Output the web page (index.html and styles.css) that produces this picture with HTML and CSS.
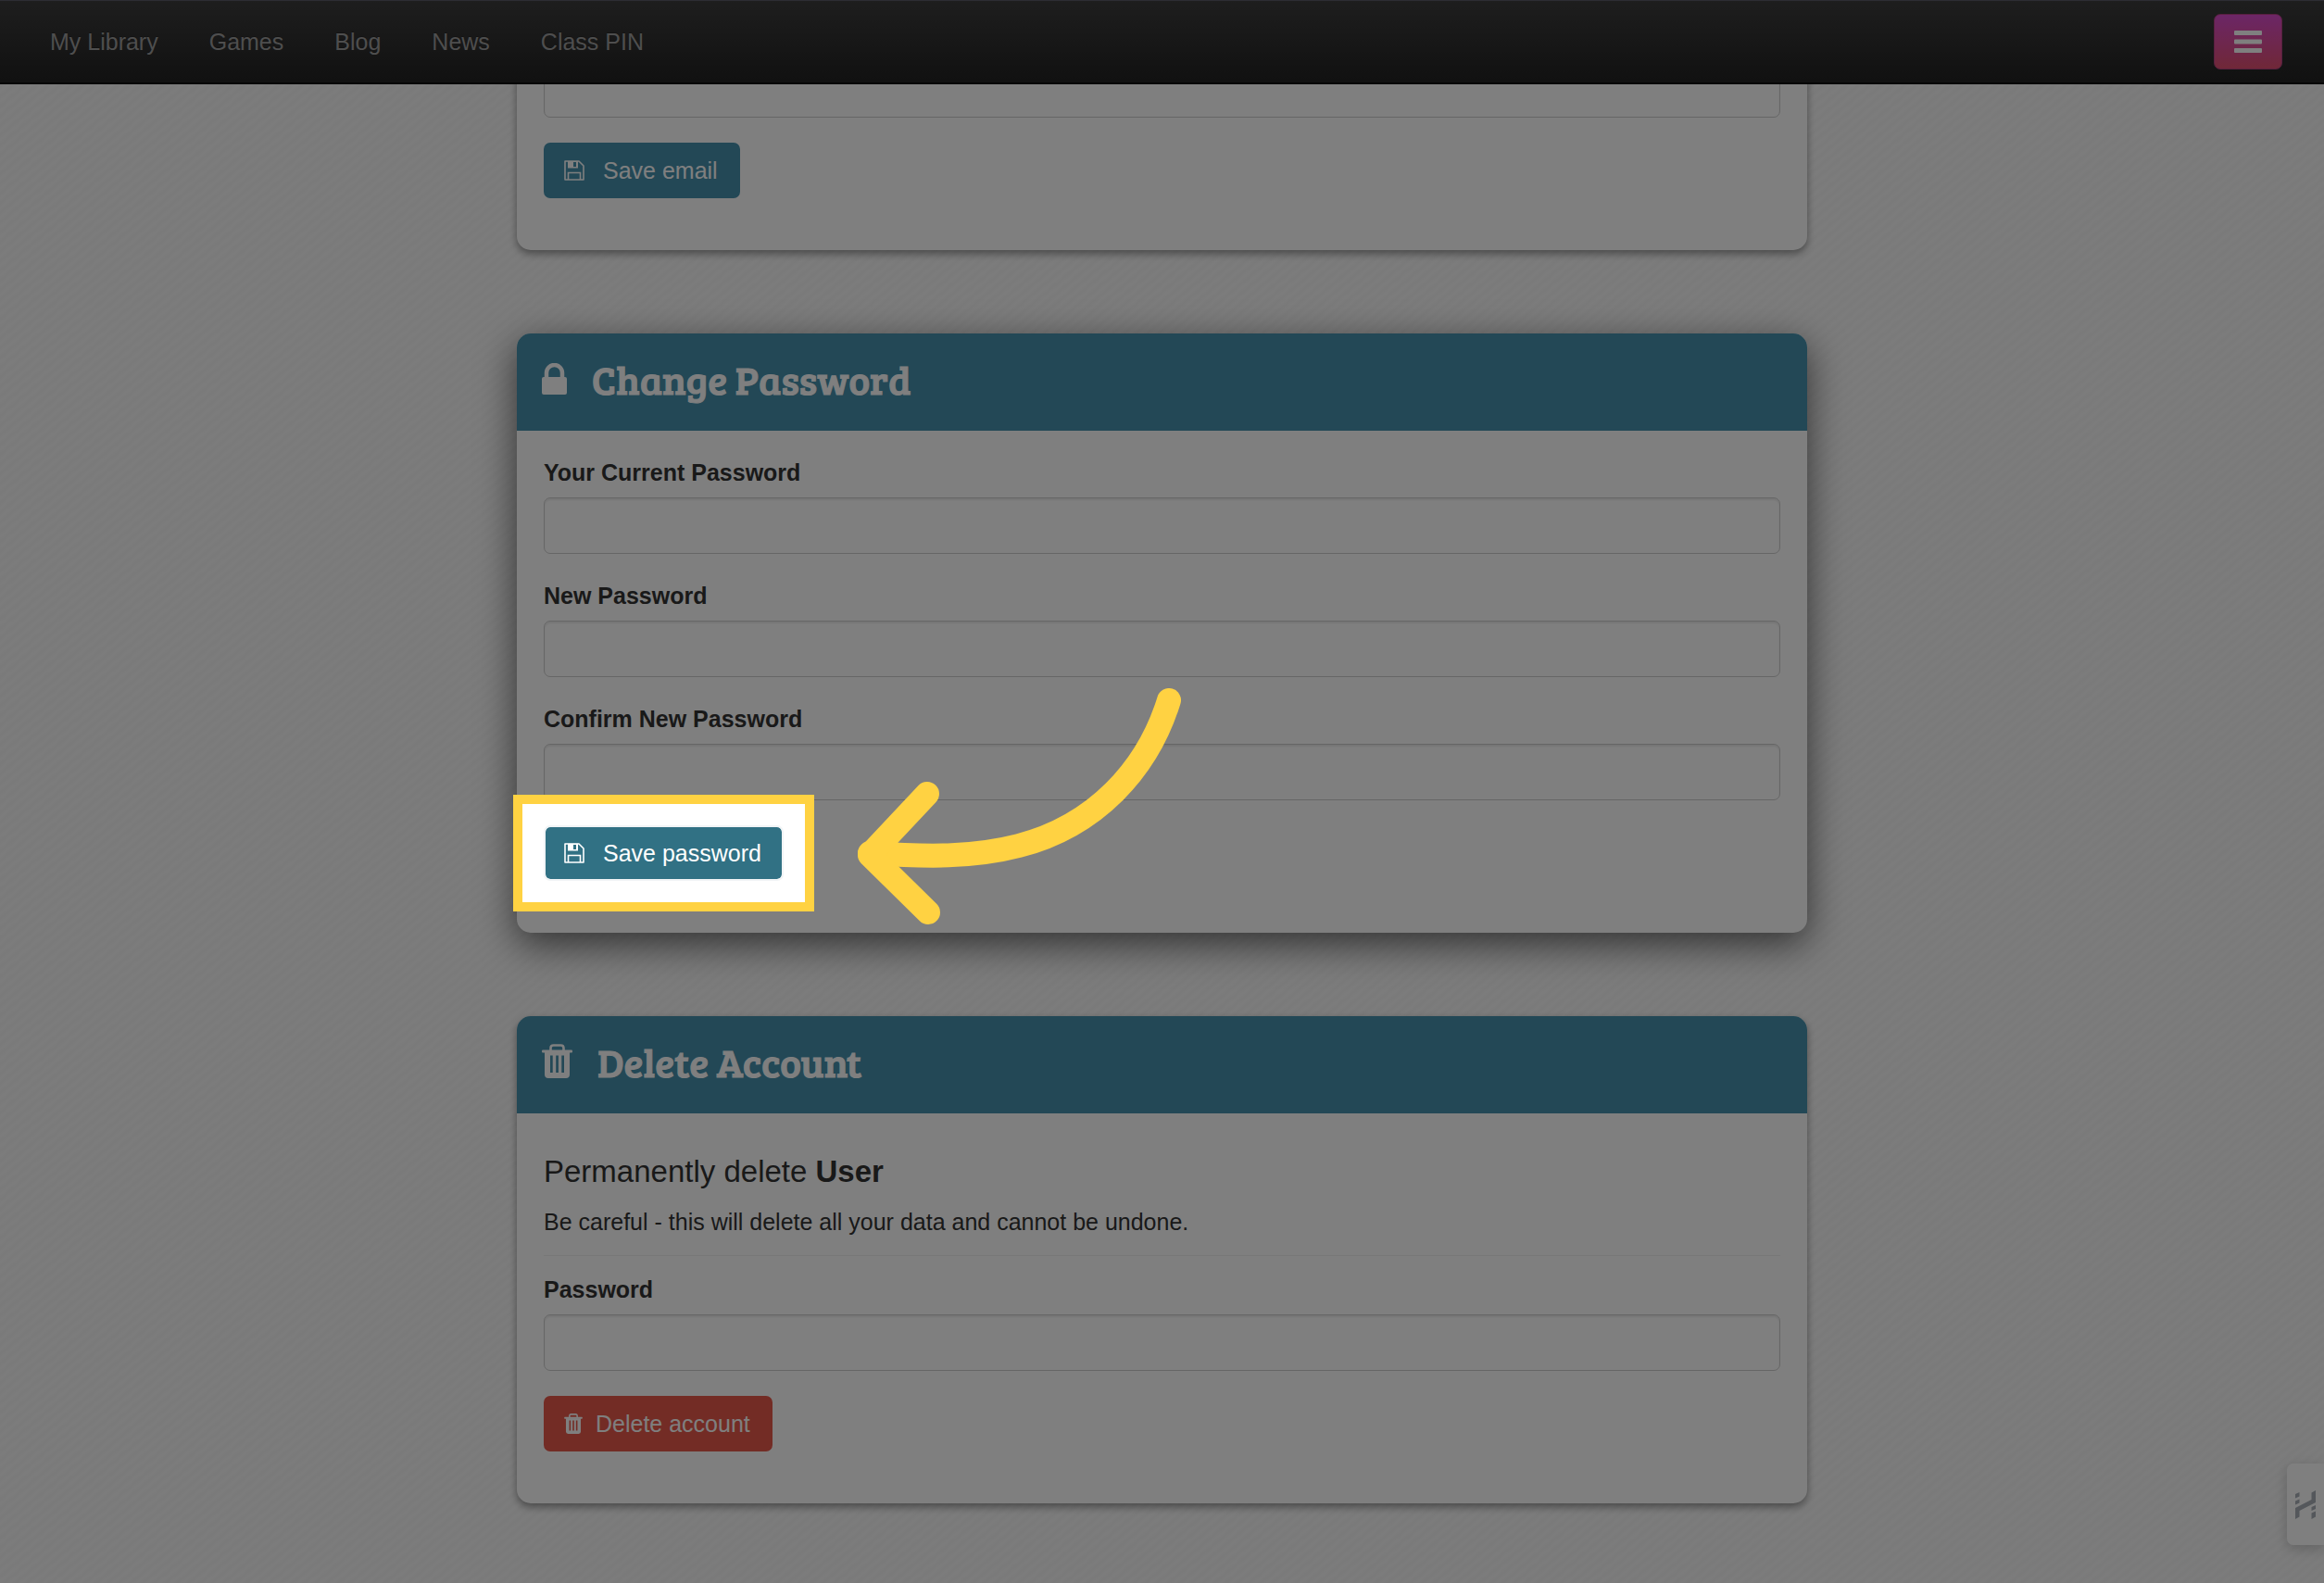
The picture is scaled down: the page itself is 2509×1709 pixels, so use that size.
FILE: index.html
```
<!DOCTYPE html>
<html lang="en">
<head>
    <meta charset="UTF-8">
    <meta name="viewport" content="width=device-width, initial-scale=1.0">
    <title>Account settings</title>
    <link rel="stylesheet" href="styles.css">
</head>
<body>
    <nav class="navbar">
        <ul class="nav-links">
            <li><a href="#">My Library</a></li>
            <li><a href="#">Games</a></li>
            <li><a href="#">Blog</a></li>
            <li><a href="#">News</a></li>
            <li><a href="#">Class PIN</a></li>
        </ul>
        <button type="button" class="menu-button" aria-label="Menu">
            <svg width="30" height="24" viewBox="0 0 30 24" fill="currentColor">
                <rect width="30" height="5" rx="1"/>
                <rect y="9.5" width="30" height="5" rx="1"/>
                <rect y="19" width="30" height="5" rx="1"/>
            </svg>
        </button>
    </nav>

    <!-- Shared icons -->
    <svg class="sprite" aria-hidden="true">
        <symbol id="icon-save" viewBox="0 0 22 22">
            <path d="M1 1h15l5 5v15H1z" fill="none" stroke="currentColor" stroke-width="1.6" stroke-linejoin="round"/>
            <path d="M4 1h11v7.5H4zM10 2v5h3V2z" fill="currentColor" fill-rule="evenodd"/>
            <path d="M4.5 21v-7.5h13V21" fill="none" stroke="currentColor" stroke-width="1.6"/>
        </symbol>
        <symbol id="icon-trash" viewBox="0 0 33 37">
            <path d="M9.5 8V4.5Q9.5 1.5 12.5 1.5h8q3 0 3 3V8" fill="none" stroke="currentColor" stroke-width="2.6"/>
            <rect y="6.5" width="33" height="3" rx="1" fill="currentColor"/>
            <path d="M3 9h27v24q0 4-4 4H7q-4 0-4-4zM9 12.5v18.5h2.7V12.5zM15.2 12.5v18.5h2.7V12.5zM21.3 12.5v18.5H24V12.5z" fill="currentColor" fill-rule="evenodd"/>
        </symbol>
    </svg>

    <main class="container">
        <section class="card">
            <form class="card-body">
                <div class="form-group">
                    <input type="email" class="form-control" aria-label="Email">
                </div>
                <button type="button" class="btn btn-save">
                    <svg class="icon-save"><use href="#icon-save"/></svg>
                    Save email
                </button>
            </form>
        </section>

        <section class="card card-active">
            <h2 class="card-header">
                <svg width="27" height="34" viewBox="0 0 27 34">
                    <path d="M5 17V10.5a8.5 8.5 0 0 1 17 0V17" fill="none" stroke="currentColor" stroke-width="4.5"/>
                    <rect y="15" width="27" height="19" rx="2" fill="currentColor"/>
                </svg>
                Change Password
            </h2>
            <form class="card-body">
                <div class="form-group">
                    <label for="current-password">Your Current Password</label>
                    <input type="password" id="current-password" class="form-control">
                </div>
                <div class="form-group">
                    <label for="new-password">New Password</label>
                    <input type="password" id="new-password" class="form-control">
                </div>
                <div class="form-group">
                    <label for="confirm-password">Confirm New Password</label>
                    <input type="password" id="confirm-password" class="form-control">
                </div>
                <div class="step">
                    <button type="button" class="btn btn-save btn-current">
                        <svg class="icon-save"><use href="#icon-save"/></svg>
                        Save password
                    </button>
                    <div class="spotlight"></div>
                    <svg class="arrow" width="350" height="256" viewBox="0 0 350 256">
                        <path d="M337 13C314 88 257 149 175 170C125 183 75 182 14 178"/>
                        <path d="M76 114L14 180L77 242"/>
                    </svg>
                </div>
            </form>
        </section>

        <section class="card">
            <h2 class="card-header">
                <svg width="33" height="37"><use href="#icon-trash"/></svg>
                Delete Account
            </h2>
            <form class="card-body">
                <h4>Permanently delete <strong>User</strong></h4>
                <p>Be careful - this will delete all your data and cannot be undone.</p>
                <hr>
                <div class="form-group">
                    <label for="password">Password</label>
                    <input type="password" id="password" class="form-control">
                </div>
                <button type="button" class="btn btn-delete">
                    <svg class="icon-trash"><use href="#icon-trash"/></svg>
                    Delete account
                </button>
            </form>
        </section>
    </main>

    <button type="button" class="widget" aria-label="Help">
        <svg width="22" height="31" viewBox="0 0 22 31" fill="currentColor">
            <path d="M0 19L17.5 10V2.5L22 0V13L4.5 22V28.5L0 31z"/>
            <path d="M0 4l4.5-2v4.5L0 8.5zM0 11.5l4.5-2v4L0 15.5zM17.5 18l4.5-2v4l-4.5 2zM17.5 24.5l4.5-2v6L17.5 31z"/>
        </svg>
    </button>
</body>
</html>
```
FILE: styles.css
```
* {
    box-sizing: border-box;
}

body {
    margin: 0;
    min-height: 100vh;
    font-family: "Helvetica Neue", "Liberation Sans", Arial, sans-serif;
    font-size: 25px;
    line-height: 36px;
    color: #333;
    background: repeating-linear-gradient(140deg, #f4f4f4 0, #f9f9f9 4px, #f4f4f4 8px);
}

.sprite {
    display: none;
}

/* Navbar */
.navbar {
    position: fixed;
    top: 0;
    left: 0;
    right: 0;
    z-index: 5;
    height: 91px;
    padding: 0 45px 0 27px;
    display: flex;
    align-items: center;
    justify-content: space-between;
    background: linear-gradient(#3c3c3c, #222);
    border-top: 1px solid #5a5a66;
    border-bottom: 2px solid #080808;
}

.nav-links {
    display: flex;
    gap: 1px;
    margin: 0;
    padding: 0;
    list-style: none;
}

.nav-links a {
    padding: 27px;
    color: #9d9d9d;
    text-decoration: none;
    text-shadow: 0 -1px 0 rgba(0, 0, 0, 0.25);
}

.menu-button {
    display: flex;
    align-items: center;
    justify-content: center;
    width: 74px;
    height: 60px;
    padding: 0;
    color: #fff;
    background: linear-gradient(#d84ccc, #e05070);
    border: 1px solid #b04080;
    border-radius: 7px;
}

/* Cards */
.container {
    max-width: 1393px;
    margin: 0 auto;
    padding: 39px 0 84px;
    display: flex;
    flex-direction: column;
    gap: 90px;
}

.card {
    background-color: #fff;
    border-radius: 15px;
    box-shadow: 0 4px 9px rgba(0, 0, 0, 0.4);
}

.card-active {
    box-shadow: 0 12px 40px rgba(0, 0, 0, 0.6);
}

.card-header {
    display: flex;
    align-items: center;
    gap: 27px;
    height: 105px;
    margin: 0;
    padding: 0 27px 8px;
    font-family: "Bree Serif", "DejaVu Serif Condensed", "DejaVu Serif", serif;
    font-size: 43px;
    font-weight: normal;
    -webkit-text-stroke: 1px #fff;
    color: #fff;
    background-color: #4690ad;
    border-radius: 15px 15px 0 0;
}

.card-body {
    padding: 27px 29px 56px;
}

.card-body h4 {
    margin: 18px 0;
    font-size: 33px;
    font-weight: normal;
}

.card-body p {
    margin: 18px 0;
}

hr {
    margin: 18px 0;
    border: 0;
    border-top: 1px solid #eee;
}

/* Forms */
.form-group {
    margin-bottom: 27px;
}

label {
    display: block;
    margin-bottom: 9px;
    font-weight: bold;
}

.form-control {
    display: block;
    width: 100%;
    height: 61px;
    padding: 11px 21px;
    font: inherit;
    background-color: #fff;
    border: 1px solid #ccc;
    border-radius: 7px;
    box-shadow: inset 0 2px 2px rgba(0, 0, 0, 0.08);
}

.btn {
    display: flex;
    align-items: center;
    height: 60px;
    padding: 0 22px 0 20px;
    font: inherit;
    color: #fff;
    border: 2px solid transparent;
    border-radius: 7px;
    cursor: pointer;
}

.btn-save {
    gap: 20px;
    background-color: #4690ad;
    border-color: #4690ad;
}

.btn-current {
    background-color: #317184;
    background-clip: padding-box;
    border-color: #f1f4f6;
}

.btn-delete {
    gap: 14px;
    background-color: #e6584a;
    border-color: #e6584a;
}

.icon-save {
    width: 22px;
    height: 22px;
}

.icon-trash {
    width: 20px;
    height: 22px;
}

/* Highlighted step: everything outside the box is dimmed */
.step {
    position: relative;
    width: fit-content;
}

.spotlight {
    position: absolute;
    inset: -33px;
    z-index: 10;
    border: 10px solid #ffd242;
    box-shadow: 0 0 0 200vmax rgba(0, 0, 0, 0.5);
    pointer-events: none;
}

.arrow {
    position: absolute;
    left: 338px;
    top: -148px;
    z-index: 11;
    fill: none;
    stroke: #ffd242;
    stroke-width: 26;
    stroke-linecap: round;
    stroke-linejoin: round;
    pointer-events: none;
}

.widget {
    position: fixed;
    right: 0;
    bottom: 41px;
    display: flex;
    align-items: center;
    justify-content: center;
    width: 40px;
    height: 88px;
    padding: 0;
    color: #a8aeb6;
    background-color: #fff;
    border: 0;
    border-radius: 7px 0 0 7px;
    box-shadow: 0 4px 14px rgba(0, 0, 0, 0.2);
}
```
